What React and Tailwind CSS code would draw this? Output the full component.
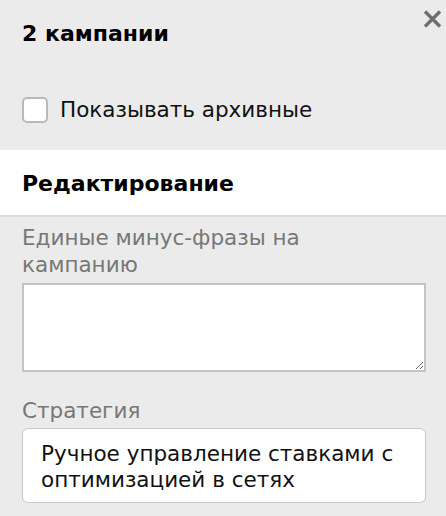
import React from "react";

const font = { fontFamily: '"DejaVu Sans", Verdana, sans-serif' };

export default function App() {
  return (
    <div className="relative min-h-[516px] w-[446px] bg-[#ebebeb] text-[21.5px]" style={font}>
      <button className="absolute right-[4px] top-[10px] h-[18px] w-[19px] text-[#6f6f6f]" aria-label="close">
        <svg viewBox="0 0 19 18" className="h-[18px] w-[19px]">
          <path d="M2 1.5 L17 16.5 M17 1.5 L2 16.5" stroke="currentColor" strokeWidth="3.4" />
        </svg>
      </button>

      <div className="px-[22px] pt-[20px] pb-[26px]">
        <div className="text-[22px] font-bold leading-[28px] text-black">2 кампании</div>
        <label className="mt-[48px] flex items-center gap-[12px]">
          <span className="h-[26px] w-[26px] shrink-0 rounded-[5px] border-2 border-[#b9b9b9] bg-white" />
          <span className="leading-[28px] text-[#111]">Показывать архивные</span>
        </label>
      </div>

      <div className="border-b-2 border-[#dcdcdc] bg-white px-[22px] pt-[20px] pb-[17px]">
        <div className="text-[22px] font-bold leading-[28px] text-black">Редактирование</div>
      </div>

      <div className="px-[22px] pt-[7px]">
        <div className="w-[330px] leading-[27px] text-[#777]">Единые минус-фразы на кампанию</div>
        <textarea className="mt-[5px] block h-[89px] w-[404px] border-2 border-[#c4c4c4] bg-white" />
        <div className="mt-[25px] leading-[27px] text-[#777]">Стратегия</div>
        <div className="mt-[4px] w-[404px] rounded-[6px] border border-[#c9c9c9] bg-white pl-[18px] pr-[8px] pt-[12px] pb-[9px] leading-[26px] text-[#111]">
          Ручное управление ставками с оптимизацией в сетях
        </div>
      </div>
    </div>
  );
}
